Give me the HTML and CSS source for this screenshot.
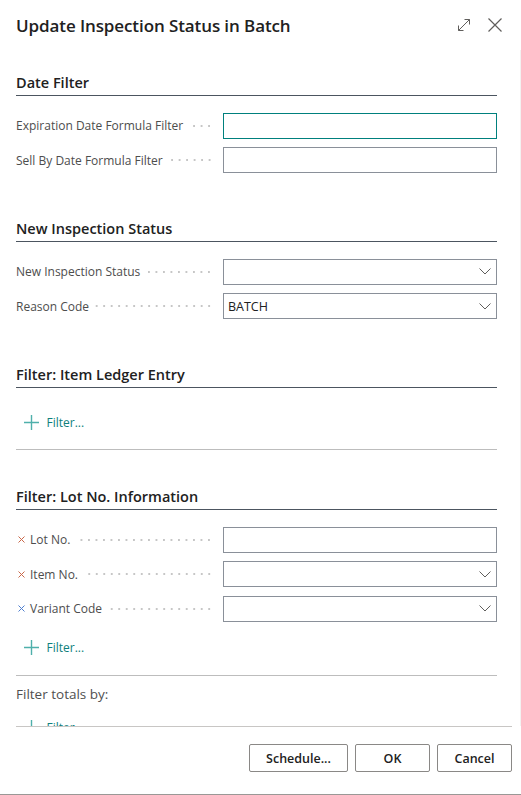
FILE: index.html
```html
<!DOCTYPE html>
<html lang="en">
<head>
<meta charset="utf-8">
<title>Update Inspection Status in Batch</title>
<link rel="stylesheet" href="styles.css">
</head>
<body>
<div class="dialog">
  <header class="titlebar">
    <h1 class="title">Update Inspection Status in Batch</h1>
    <div class="title-actions">
      <svg class="icon" width="16" height="16" viewBox="0 0 16 16" aria-hidden="true">
        <path d="M2.5 13.5 L13.5 2.5 M8.5 2.5 H13.5 V7.5 M2.5 8.5 V13.5 H7.5" fill="none" stroke="#605e5c" stroke-width="1"/>
      </svg>
      <svg class="icon" width="16" height="16" viewBox="0 0 16 16" aria-hidden="true">
        <path d="M1.5 1.5 L14.5 14.5 M14.5 1.5 L1.5 14.5" fill="none" stroke="#605e5c" stroke-width="1.2"/>
      </svg>
    </div>
  </header>

  <main class="content">
    <section class="group">
      <h2 class="group-title">Date Filter</h2>
      <div class="fields">
        <div class="field">
          <label class="label"><span class="label-text">Expiration Date Formula Filter</span><span class="leader"></span></label>
          <div class="input is-focused"></div>
        </div>
        <div class="field">
          <label class="label"><span class="label-text">Sell By Date Formula Filter</span><span class="leader"></span></label>
          <div class="input"></div>
        </div>
      </div>
    </section>

    <section class="group">
      <h2 class="group-title">New Inspection Status</h2>
      <div class="fields">
        <div class="field">
          <label class="label"><span class="label-text">New Inspection Status</span><span class="leader"></span></label>
          <div class="input select"><span class="value"></span>
            <svg class="chev" width="12" height="7" viewBox="0 0 12 7"><path d="M0.5 0.5 L6 6 L11.5 0.5" fill="none" stroke="#605e5c" stroke-width="1"/></svg>
          </div>
        </div>
        <div class="field">
          <label class="label"><span class="label-text">Reason Code</span><span class="leader"></span></label>
          <div class="input select"><span class="value">BATCH</span>
            <svg class="chev" width="12" height="7" viewBox="0 0 12 7"><path d="M0.5 0.5 L6 6 L11.5 0.5" fill="none" stroke="#605e5c" stroke-width="1"/></svg>
          </div>
        </div>
      </div>
    </section>

    <section class="group">
      <h2 class="group-title">Filter: Item Ledger Entry</h2>
      <div class="add-filter">
        <svg class="plus" width="15" height="15" viewBox="0 0 15 15"><path d="M7.5 0 V15 M0 7.5 H15" fill="none" stroke="#4fb0ab" stroke-width="1.4"/></svg>
        <span class="add-filter-text">Filter...</span>
      </div>
      <div class="separator"></div>
    </section>

    <section class="group group-lot">
      <h2 class="group-title">Filter: Lot No. Information</h2>
      <div class="fields">
        <div class="field">
          <label class="label"><svg class="x-mark" width="7" height="7" viewBox="0 0 7 7"><path d="M0.5 0.5 L6.5 6.5 M6.5 0.5 L0.5 6.5" stroke="#c9684a" stroke-width="1" fill="none"/></svg><span class="label-text">Lot No.</span><span class="leader"></span></label>
          <div class="input"></div>
        </div>
        <div class="field">
          <label class="label"><svg class="x-mark" width="7" height="7" viewBox="0 0 7 7"><path d="M0.5 0.5 L6.5 6.5 M6.5 0.5 L0.5 6.5" stroke="#c9684a" stroke-width="1" fill="none"/></svg><span class="label-text">Item No.</span><span class="leader"></span></label>
          <div class="input select"><span class="value"></span>
            <svg class="chev" width="12" height="7" viewBox="0 0 12 7"><path d="M0.5 0.5 L6 6 L11.5 0.5" fill="none" stroke="#605e5c" stroke-width="1"/></svg>
          </div>
        </div>
        <div class="field">
          <label class="label"><svg class="x-mark" width="7" height="7" viewBox="0 0 7 7"><path d="M0.5 0.5 L6.5 6.5 M6.5 0.5 L0.5 6.5" stroke="#4f7fcf" stroke-width="1" fill="none"/></svg><span class="label-text">Variant Code</span><span class="leader"></span></label>
          <div class="input select"><span class="value"></span>
            <svg class="chev" width="12" height="7" viewBox="0 0 12 7"><path d="M0.5 0.5 L6 6 L11.5 0.5" fill="none" stroke="#605e5c" stroke-width="1"/></svg>
          </div>
        </div>
      </div>
      <div class="add-filter add-filter-lot">
        <svg class="plus" width="15" height="15" viewBox="0 0 15 15"><path d="M7.5 0 V15 M0 7.5 H15" fill="none" stroke="#4fb0ab" stroke-width="1.4"/></svg>
        <span class="add-filter-text">Filter...</span>
      </div>
      <div class="separator"></div>
      <p class="totals">Filter totals by:</p>
      <div class="add-filter add-filter-totals">
        <svg class="plus" width="15" height="15" viewBox="0 0 15 15"><path d="M7.5 0 V15 M0 7.5 H15" fill="none" stroke="#4fb0ab" stroke-width="1.4"/></svg>
        <span class="add-filter-text">Filter...</span>
      </div>
    </section>
  </main>

  <footer class="footer">
    <button class="btn btn-wide" type="button">Schedule...</button>
    <button class="btn" type="button">OK</button>
    <button class="btn" type="button">Cancel</button>
  </footer>
</div>
</body>
</html>
```

FILE: styles.css
```css
* { box-sizing: border-box; }

html, body {
  margin: 0;
  padding: 0;
  background: #ffffff;
}

body {
  font-family: "Open Sans", "Noto Sans", "Liberation Sans", sans-serif;
  color: #212121;
}

.dialog {
  width: 521px;
  height: 795px;
  display: flex;
  flex-direction: column;
  border-bottom: 1px solid #9a9896;
  background: #fff;
}

.titlebar {
  height: 50px;
  flex: none;
  display: flex;
  align-items: center;
  justify-content: space-between;
  padding: 0 18px 0 16px;
}

.title {
  margin: 0;
  font-size: 17px;
  font-weight: 600;
  color: #212121;
  letter-spacing: -0.1px;
}

.title-actions {
  display: flex;
  gap: 15px;
  align-items: center;
}

.icon { display: block; }

.content {
  flex: 1;
  overflow: hidden;
  padding: 23px 23px 0 16px;
  border-right: 1px solid #f3f2f1;
}

.group + .group { margin-top: 46px; }
.group-lot { margin-top: 37px !important; }

.group-title {
  margin: 0;
  font-size: 14.5px;
  line-height: 20px;
  font-weight: 600;
  color: #212121;
  padding-bottom: 2px;
  border-bottom: 1px solid #4c5560;
}

.fields {
  display: flex;
  flex-direction: column;
  gap: 8.5px;
  margin-top: 16.5px;
}

.field {
  display: grid;
  grid-template-columns: 197px 1fr;
  column-gap: 10px;
  align-items: center;
  height: 26px;
}

.label {
  display: flex;
  align-items: center;
  font-size: 12px;
  color: #4d4d4d;
  white-space: nowrap;
  min-width: 0;
}

.x-mark {
  flex: none;
  margin: 0 5px 0 2px;
}

.leader {
  flex: 1;
  height: 4px;
  margin-left: 6px;
  background-image: radial-gradient(circle, #c6c6c6 0.9px, transparent 1.1px);
  background-size: 7.5px 4px;
  background-repeat: repeat-x;
  background-position: right center;
}

.input {
  height: 26px;
  border: 1px solid #8a9099;
  background: #fff;
  display: flex;
  align-items: center;
  justify-content: space-between;
  padding: 0 5px 0 4px;
  font-size: 12.5px;
  color: #212121;
}

.input.is-focused { border-color: #00807d; }

.chev { flex: none; }

.add-filter {
  display: flex;
  align-items: center;
  height: 20px;
  margin-top: 24px;
  padding-left: 7.5px;
  gap: 8px;
}

.add-filter-lot { margin-top: 16px; }
.add-filter-totals { margin-top: 14px; }

.plus { flex: none; }

.add-filter-text {
  font-size: 12px;
  color: #0e7f7b;
}

.separator {
  height: 1px;
  background: #bdbdbd;
  margin-top: 17px;
}

.totals {
  margin: 8px 0 0;
  line-height: 20px;
  font-size: 13.5px;
  color: #505050;
}

.footer {
  flex: none;
  margin: 0 9px 0 16px;
  border-top: 1px solid #c8c6c4;
  display: flex;
  justify-content: flex-end;
  gap: 7px;
  padding: 17px 0 22px;
}

.btn {
  height: 28px;
  width: 75px;
  border: 1px solid #8a8886;
  background: #fff;
  border-radius: 2px;
  font-family: inherit;
  font-size: 12.5px;
  font-weight: 600;
  color: #212121;
  padding: 0;
}

.btn-wide { width: 99px; }
```
